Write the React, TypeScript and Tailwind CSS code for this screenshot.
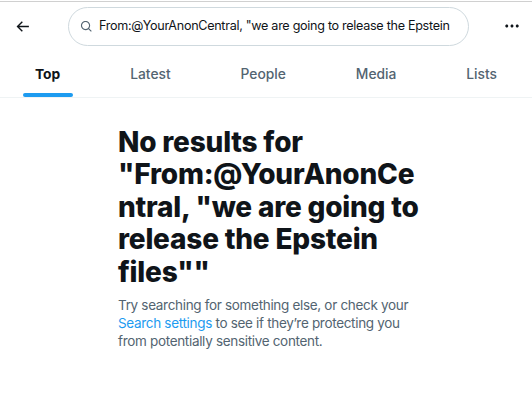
import React from "react";

const tabs = ["Top", "Latest", "People", "Media", "Lists"];

export default function App() {
  return (
    <div
      className="w-[532px] h-[400px] bg-white overflow-hidden text-[#0f1419]"
      style={{ fontFamily: "Inter, 'Liberation Sans', sans-serif" }}
    >
      <div className="h-px mt-px bg-[#d0d0d0]" />
      {/* header */}
      <div className="h-[48px] flex items-center">
        <div className="w-[68px] flex items-center pl-[14px]">
          <svg viewBox="0 0 24 24" className="w-[17px] h-[17px]" fill="#0f1419">
            <path d="M7.414 13l5.043 5.04-1.414 1.42L3.586 12l7.457-7.46 1.414 1.42L7.414 11H21v2H7.414z" />
          </svg>
        </div>
        <div className="w-[401px] h-[39px] rounded-full border border-[#cfd9de] flex items-center pl-[11px] pr-[17px]">
          <svg viewBox="0 0 24 24" className="w-[13px] h-[13px] shrink-0" fill="#536471">
            <path d="M10.25 3.75c-3.59 0-6.5 2.91-6.5 6.5s2.91 6.5 6.5 6.5c1.795 0 3.419-.726 4.596-1.904 1.178-1.177 1.904-2.801 1.904-4.596 0-3.59-2.91-6.5-6.5-6.5zm-8.5 6.5c0-4.694 3.806-8.5 8.5-8.5s8.5 3.806 8.5 8.5c0 1.986-.682 3.815-1.824 5.262l4.781 4.781-1.414 1.414-4.781-4.781c-1.447 1.142-3.276 1.824-5.262 1.824-4.694 0-8.5-3.806-8.5-8.5z" />
          </svg>
          <div className="ml-[6px] flex-1 overflow-hidden whitespace-nowrap text-[12.6px] leading-[18px] tracking-[-0.3px] text-[#0f1419]">
            From:@YourAnonCentral, "we are going to release the Epstein files""
          </div>
        </div>
        <div className="flex-1 flex justify-end items-center pr-[11px]">
          <svg viewBox="0 0 24 24" className="w-[18px] h-[18px]" fill="#0f1419">
            <path d="M3 12c0-1.1.9-2 2-2s2 .9 2 2-.9 2-2 2-2-.9-2-2zm9 2c1.1 0 2-.9 2-2s-.9-2-2-2-2 .9-2 2 .9 2 2 2zm7 0c1.1 0 2-.9 2-2s-.9-2-2-2-2 .9-2 2 .9 2 2 2z" />
          </svg>
        </div>
      </div>
      <div className="h-[3px]" />
      {/* tabs */}
      <div className="flex h-[45px] border-b border-[#eff3f4]">
        {tabs.map((t, i) => (
          <div key={t} className="flex-auto flex justify-center">
            <div
              className={
                "relative h-full flex items-center text-[13.8px] pb-[2px] " +
                (i === 0 ? "font-bold text-[#0f1419]" : "font-medium text-[#536471]")
              }
            >
              {t}
              {i === 0 && (
                <div className="absolute bottom-0 left-1/2 -translate-x-1/2 w-[50px] h-[4px] rounded-full bg-[#1d9bf0]" />
              )}
            </div>
          </div>
        ))}
      </div>
      {/* empty state */}
      <div className="w-[296px] mx-auto mt-[28px]">
        <div className="text-[28px] leading-[32.4px] font-extrabold whitespace-nowrap tracking-[-0.2px]">
          <div>No results for</div>
          <div>"From:@YourAnonCe</div>
          <div>ntral, "we are going to</div>
          <div>release the Epstein</div>
          <div>files""</div>
        </div>
        <div className="mt-[8px] text-[13.5px] leading-[18px] tracking-[-0.32px] text-[#536471] whitespace-nowrap">
          <div>Try searching for something else, or check your</div>
          <div>
            <span className="text-[#1d9bf0]">Search settings</span> to see if they’re protecting you
          </div>
          <div>from potentially sensitive content.</div>
        </div>
      </div>
    </div>
  );
}
